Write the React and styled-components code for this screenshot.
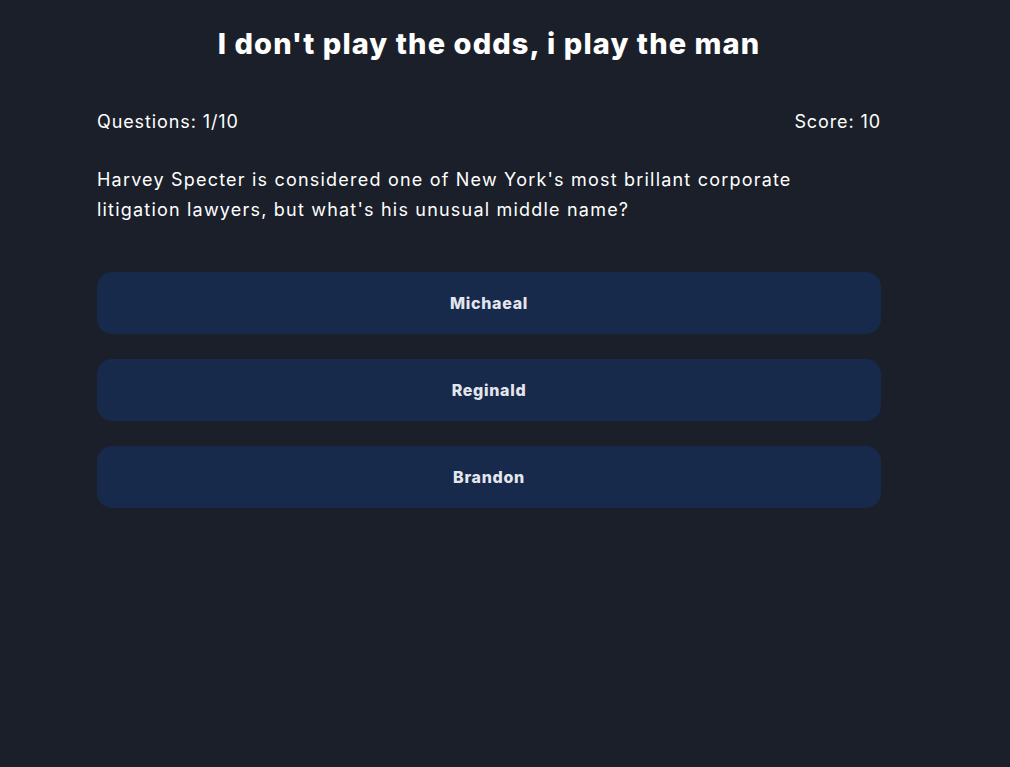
import styled, { createGlobalStyle } from "styled-components";

const GlobalStyle = createGlobalStyle`
  html, body {
    margin: 0;
    padding: 0;
    background: #1b1f2a;
    min-height: 100%;
  }
  body {
    font-family: "Inter", "Noto Sans", sans-serif;
    color: #ffffff;
  }
`;

const answers = ["Michaeal", "Reginald", "Brandon"];

const App = () => {
  return (
    <>
      <GlobalStyle />
      <Page>
        <Quiz>
          <Title>I don't play the odds, i play the man</Title>
          <Stats>
            <span>Questions: 1/10</span>
            <span>Score: 10</span>
          </Stats>
          <Question>
            Harvey Specter is considered one of New York's most brillant
            corporate litigation lawyers, but what's his unusual middle name?
          </Question>
          <Answers>
            {answers.map((a) => (
              <Answer key={a}>{a}</Answer>
            ))}
          </Answers>
        </Quiz>
      </Page>
    </>
  );
};

export default App;

const Page = styled.div`
  min-height: 767px;
  background: #1b1f2a;
  padding: 26px 0 0 97px;
  box-sizing: border-box;
`;

const Quiz = styled.div`
  width: 784px;
`;

const Title = styled.h1`
  margin: 0;
  text-align: center;
  font-size: 29px;
  font-weight: 800;
  line-height: 36px;
  letter-spacing: 1.1px;
`;

const Stats = styled.div`
  display: flex;
  justify-content: space-between;
  margin-top: 45px;
  font-size: 18px;
  line-height: 30px;
  letter-spacing: 0.9px;
`;

const Question = styled.p`
  margin: 28px 0 0;
  font-size: 18px;
  line-height: 30px;
  letter-spacing: 1.2px;
  width: 730px;
`;

const Answers = styled.div`
  display: flex;
  flex-direction: column;
  gap: 25px;
  margin-top: 47px;
`;

const Answer = styled.button`
  height: 62px;
  border: none;
  border-radius: 15px;
  background: #172a4b;
  color: #e4e6ee;
  font-family: "Inter", "Noto Sans", sans-serif;
  font-size: 16px;
  font-weight: 800;
  letter-spacing: 0.7px;
  cursor: pointer;
`;
